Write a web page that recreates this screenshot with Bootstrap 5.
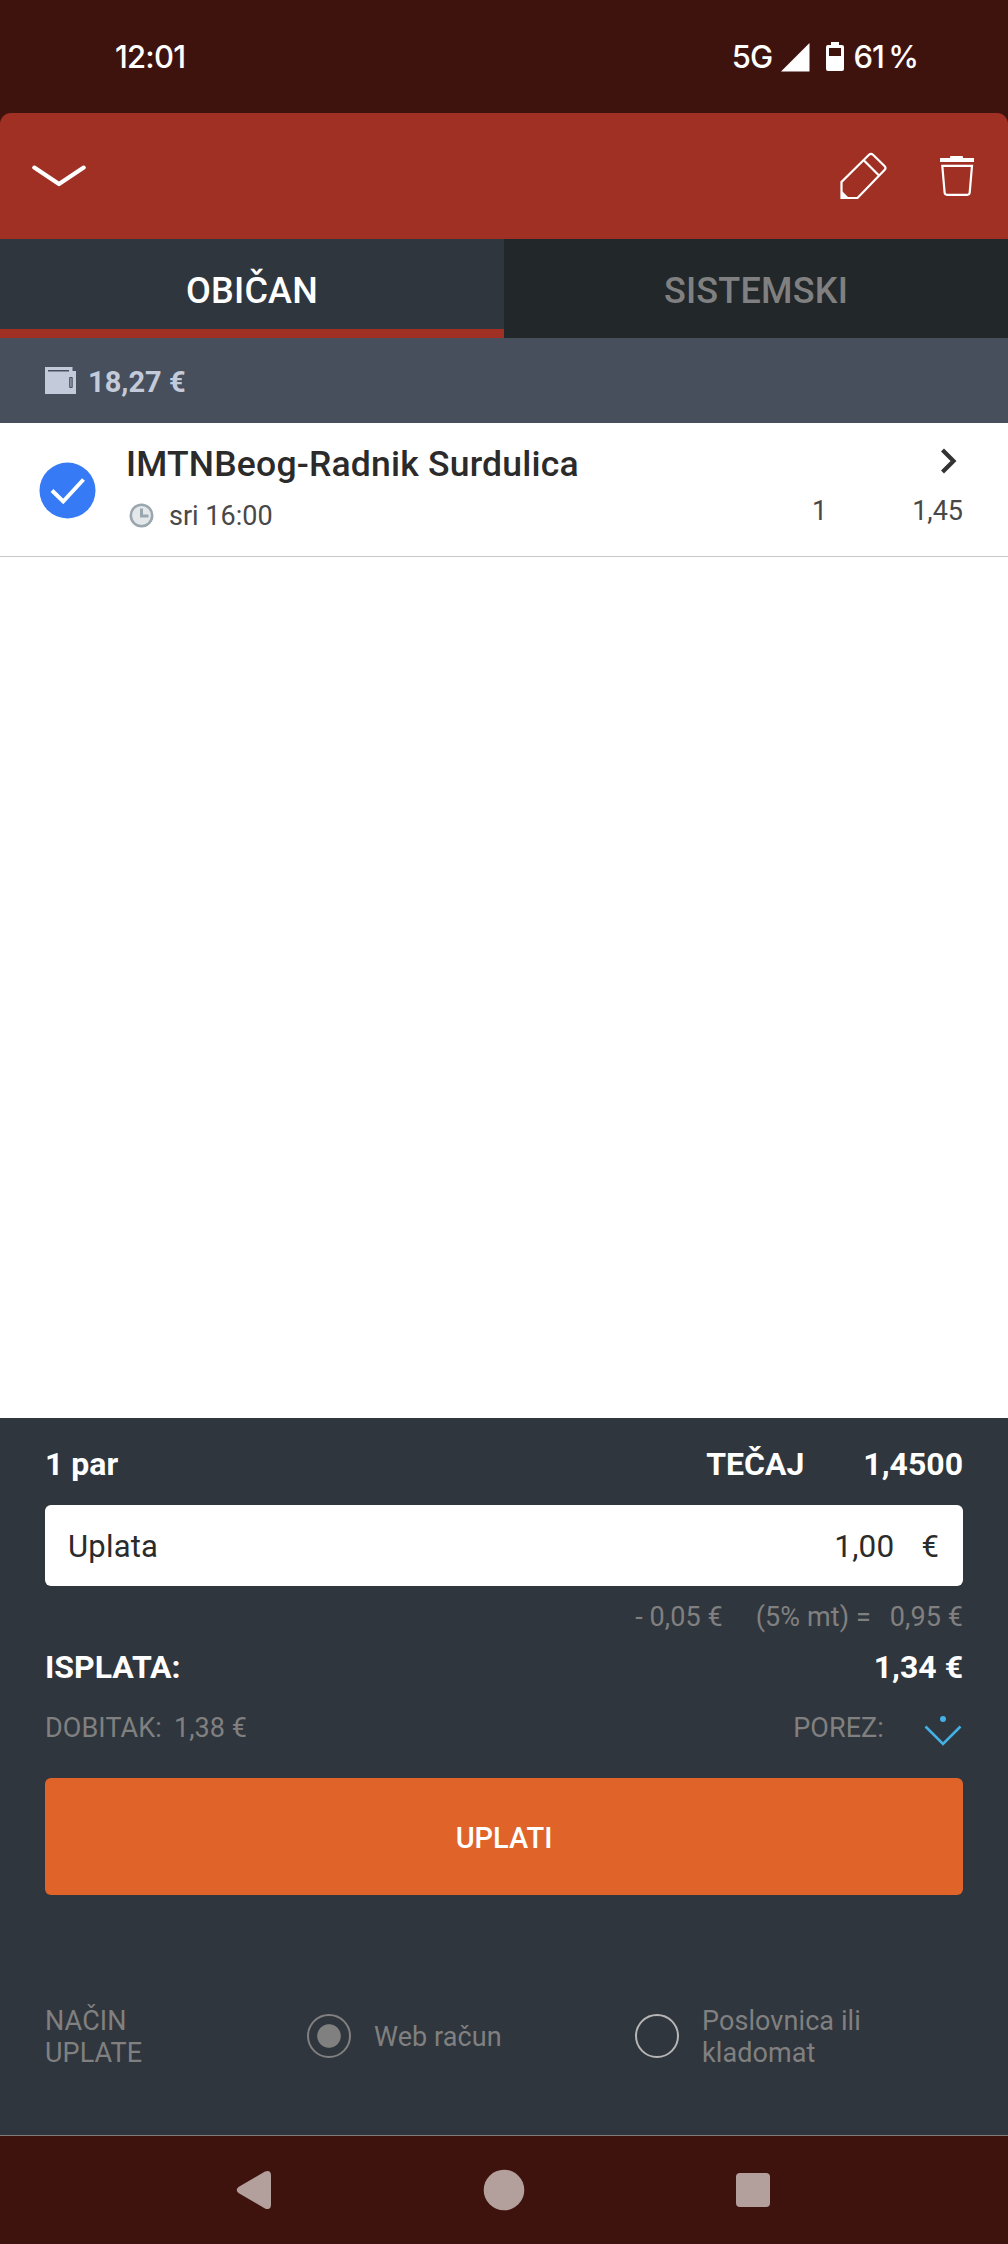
<!DOCTYPE html>
<html lang="hr">
<head>
<meta charset="utf-8">
<meta name="viewport" content="width=device-width, initial-scale=1">
<title>Listić</title>
<link href="https://cdn.jsdelivr.net/npm/bootstrap@5.3.0/dist/css/bootstrap.min.css" rel="stylesheet">
<style>
  body { font-family: Roboto, "Liberation Sans", sans-serif; background: #fff; color: #2b2b2b; line-height: 1; }
  svg { display: block; flex: none; }
  .screen { width: 1008px; height: 2244px; }
  .chrome { background: #3e130e; }
  .status { height: 113px; padding: 0 90px 0 115px; color: #fff; font: 500 31px/1 Inter, Roboto, sans-serif; letter-spacing: -.8px; }
  .status .charge { margin-left: 9px; letter-spacing: -1px; }
  .topbar { height: 126px; background: #a03024; border-radius: 11px 11px 0 0; padding: 0 33px 0 32px; }
  .trash { margin-left: 52px; }
  .bet-tabs { height: 99px; }
  .bet-tabs .nav-link { height: 99px; padding: 4px 0 0; border-radius: 0; font-size: 36px; font-weight: 500; letter-spacing: .2px; color: #808080; background: #22272a; display: flex; align-items: center; justify-content: center; }
  .bet-tabs .nav-link.active { color: #fff; background: #30363d; border-bottom: 9px solid #a03024; padding-top: 13px; }
  .balance { height: 85px; padding: 3px 45px 0; background: #464f5b; color: #c3cbdb; font-size: 29px; font-weight: 700; gap: 12px; }
  .balance svg { margin-bottom: 4px; }
  .pick { height: 134px; border-bottom: 1px solid #c8c8c8; padding: 1px 45px 0 39px; }
  .pick-body { height: 133px; padding-top: 18px; margin-left: 30px; }
  .pick-name { font-size: 35.5px; font-weight: 500; line-height: 44px; letter-spacing: .2px; }
  .pick-arrow { margin-right: 5px; margin-bottom: 5px; }
  .pick-sub { height: 26px; margin-top: 18px; padding-left: 3px; font-size: 27px; color: #484848; }
  .pick-sub svg { margin-right: 15px; margin-bottom: 2px; }
  .pick-odds { margin-bottom: 10px; }
  .pick-odds .tip { margin-right: 85px; }
  .slip { height: 717px; background: #30363d; padding: 0 45px; }
  .line-total { height: 87px; padding-top: 5px; font-size: 32px; font-weight: 700; color: #fff; }
  .rate-value { margin-left: 59px; }
  .stake { height: 81px; border-radius: 6px; padding: 1px 24px 0 23px; font-size: 31px; letter-spacing: .2px; }
  .stake .amount { font-size: 31.5px; margin-right: 27px; padding-top: 2px; }
  .muted-txt { color: #808080; font-size: 27px; letter-spacing: .08px; }
  .fee { height: 62px; }
  .fee .rate { margin: 0 19px 0 33px; }
  .payout { height: 38px; font-size: 32px; font-weight: 700; color: #fff; }
  .gain { height: 84px; }
  .gain .win { margin-left: 12px; }
  .gain svg { margin: 7px 1px 0 40px; }
  .btn-pay { height: 117px; margin-top: 8px; border: 0; border-radius: 6px; background: #e0632a; color: #fff; font-size: 29px; font-weight: 500; padding: 4px 0 0; }
  .method { height: 116px; margin-top: 83px; line-height: 32px; }
  .method span, .c-method { padding-top: 2px; }
  .method .form-check-input { width: 44px; height: 44px; margin: 0 23px 0 0; border: 2px solid #808080; background: none; flex: none; opacity: 1; }
  .method .form-check-input:checked { background: radial-gradient(circle, #808080 11.3px, transparent 12.2px); }
  .method .form-check-input.alt { border-color: #b6b6b6; }
  .sysnav { height: 109px; border-top: 1px solid #807c7b; }
  .c-method { width: 262px; } .c-web { width: 328px; }
</style>
<script src="https://cdn.jsdelivr.net/npm/bootstrap@5.3.0/dist/js/bootstrap.bundle.min.js"></script>
</head>
<body>
<div class="screen d-flex flex-column">
  <div class="chrome">
    <div class="status d-flex align-items-center justify-content-between">
      <span>12:01</span>
      <div class="d-flex align-items-center">
        <span class="me-2">5G</span>
        <svg width="30" height="30" viewBox="0 0 30 30"><path d="M1 29.5 29.5 1v28.5z" fill="#fff"/></svg>
        <svg class="ms-3" width="18" height="30" viewBox="0 0 18 30"><path fill="#fff" fill-rule="evenodd" d="M5 0h8v3h3q2 0 2 2v22q0 2-2 2H2q-2 0-2-2V5q0-2 2-2h3zM3 6v8h12V6z"/></svg>
        <span class="charge">61&thinsp;%</span>
      </div>
    </div>
    <header class="topbar d-flex align-items-center justify-content-between">
      <svg width="54" height="22" viewBox="0 0 54 22" fill="none" stroke="#fff" stroke-width="4.2" stroke-linecap="round" stroke-linejoin="round"><path d="M2.3 2.6 27 19 51.7 2.6"/></svg>
      <div class="d-flex align-items-center">
        <svg width="48" height="48" viewBox="0 0 48 48" fill="none" stroke="#fff" stroke-width="2.2"><path d="M2.5 46V30L30 2.8q2-2 4 0L45.500 14q2 2 0 4L18.500 46zM25 8.500 39.500 23"/><path d="M2 38l8.500 8.500H2z" fill="#fff" stroke="none"/></svg>
        <svg class="trash" width="36" height="42" viewBox="0 0 36 42"><path d="M1 3h10V2q0-1 1-1h11q1 0 1 1v1h11v4H1z" fill="#fff"/><path d="M3.300 10.800H33L30.700 37.500q-.2 2.300-2.500 2.300H8.100q-2.300 0-2.500-2.300z" fill="none" stroke="#fff" stroke-width="2.200"/></svg>
      </div>
    </header>
  </div>

  <nav class="bet-tabs nav nav-pills nav-justified flex-nowrap">
    <a class="nav-link active w-50" href="#">OBIČAN</a>
    <a class="nav-link w-50" href="#">SISTEMSKI</a>
  </nav>

  <div class="balance d-flex align-items-center">
    <svg width="31" height="27" viewBox="0 0 31 27"><path d="M0 0h27.500v4H31v23H0z" fill="#c3cbdb"/><path d="M3 3h21v1.500H3z" fill="#464f5b"/><path d="M24.700 10.500h2.500v10h-2.500z" fill="#9099a8" stroke="#464f5b" stroke-width="1"/></svg>
    <span>18,27 €</span>
  </div>

  <main class="flex-grow-1">
    <div class="pick d-flex align-items-center">
      <svg width="57" height="57" viewBox="0 0 57 57"><circle cx="28.500" cy="28.500" r="28" fill="#377af6"/><path d="M13 28.500 24.200 39.500 44.500 17.500" fill="none" stroke="#fff" stroke-width="4"/></svg>
      <div class="pick-body flex-grow-1">
        <div class="d-flex align-items-center justify-content-between">
          <span class="pick-name">IMTNBeog-Radnik Surdulica</span>
          <svg class="pick-arrow" width="18" height="26" viewBox="0 0 18 26"><path d="M2.500 2 13.500 13 2.500 24" fill="none" stroke="#333" stroke-width="4.200"/></svg>
        </div>
        <div class="pick-sub d-flex align-items-center">
          <svg width="25" height="25" viewBox="0 0 25 25"><circle cx="12.500" cy="12.500" r="10.700" fill="#e4e8ea" stroke="#9aa7ae" stroke-width="2.600"/><path d="M12.500 5.500v7.500h7" fill="none" stroke="#9aa7ae" stroke-width="3"/></svg>
          <span class="flex-grow-1">sri 16:00</span>
          <div class="pick-odds d-flex"><span class="tip">1</span><span>1,45</span></div>
        </div>
      </div>
    </div>
  </main>

  <section class="slip">
    <div class="line-total d-flex align-items-center">
      <span class="flex-grow-1">1 par</span><span>TEČAJ</span><span class="rate-value">1,4500</span>
    </div>
    <div class="stake bg-white d-flex align-items-center">
      <span class="flex-grow-1">Uplata</span><span class="amount">1,00</span><span>€</span>
    </div>
    <div class="fee muted-txt d-flex align-items-center justify-content-end">
      <span>- 0,05 €</span><span class="rate">(5% mt) =</span><span>0,95 €</span>
    </div>
    <div class="payout d-flex align-items-center justify-content-between"><span>ISPLATA:</span><span>1,34 €</span></div>
    <div class="gain muted-txt d-flex align-items-center">
      <span>DOBITAK:</span><span class="win flex-grow-1">1,38 €</span><span>POREZ:</span>
      <svg width="38" height="34" viewBox="0 0 38 34"><circle cx="19" cy="4" r="3" fill="#43b0e6"/><path d="M1.500 11.500 19 29 36.500 11.500" fill="none" stroke="#43b0e6" stroke-width="2.600"/></svg>
    </div>
    <button class="btn btn-pay w-100" type="button">UPLATI</button>
    <div class="method muted-txt d-flex align-items-center">
      <div class="c-method">NAČIN<br>UPLATE</div>
      <label class="c-web d-flex align-items-center"><input class="form-check-input" type="radio" name="m" checked><span>Web račun</span></label>
      <label class="d-flex align-items-center"><input class="form-check-input alt" type="radio" name="m"><span>Poslovnica ili<br>kladomat</span></label>
    </div>
  </section>

  <footer class="sysnav chrome d-flex align-items-center justify-content-center">
    <svg width="536" height="44" viewBox="0 0 536 44" fill="#b3a09d"><path d="M2.500 19 29 3.500q6-2 6 4v29q0 6-6 4L2.500 25q-3.500-3 0-6z"/><circle cx="268" cy="22" r="20.300"/><rect x="500" y="5" width="34" height="34" rx="4"/></svg>
  </footer>
</div>
</body>
</html>
